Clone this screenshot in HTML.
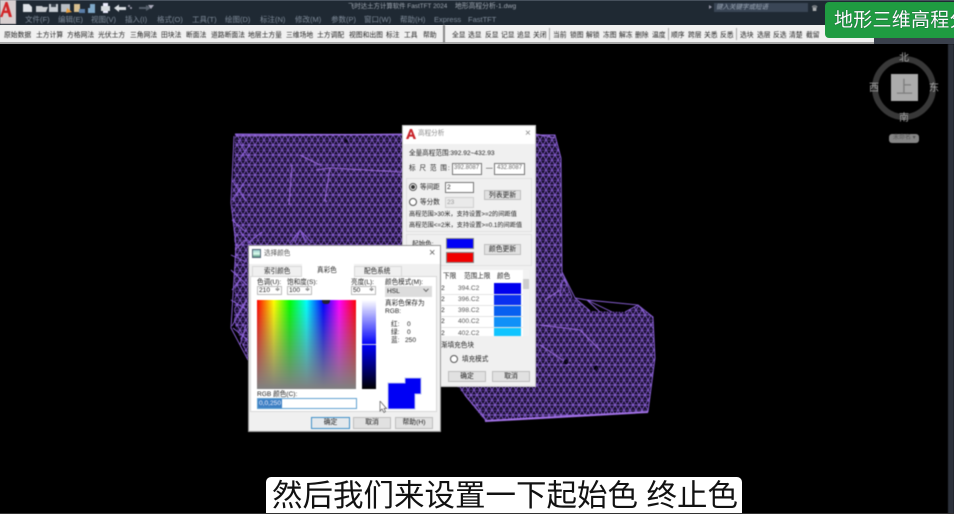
<!DOCTYPE html>
<html lang="zh"><head><meta charset="utf-8"><title>地形高程分析</title>
<style>
html,body{margin:0;padding:0;background:#000}
#p{position:relative;width:954px;height:514px;overflow:hidden;background:#000;font-family:"Liberation Sans","Noto Sans CJK SC",sans-serif}
#p div,#p span{position:absolute;white-space:nowrap;box-sizing:border-box}
.b{filter:blur(.55px)}
#m span{top:15px;font-size:7.5px;line-height:9px;color:#7f8b99}
#t span{top:6px;font-size:6.8px;line-height:9px;color:#222}
.d{background:#f0f0f0;border:1px solid #c8c8c8}
.d span{font-size:6.6px;line-height:9px;color:#222}
.i{background:#fff;border:1px solid #777}
.btn{background:#e1e1e1;border:1px solid #bdbdbd;font-size:6.8px;line-height:9px;color:#222;text-align:center}
.r{width:8px;height:8px;border:1px solid #555;border-radius:50%;background:#fff}
.g{border:1px solid #e0e0e0}
</style></head><body>
<div id="p">
<svg style="position:absolute;left:0;top:0;filter:blur(.4px)" width="954" height="514" viewBox="0 0 954 514">
<defs>
<pattern id="h" width="6" height="10" patternUnits="userSpaceOnUse">
<rect width="6" height="10" fill="#1a0f30"/>
<path d="M0 0H6M0 5H6M0 0L3 5L6 0M3 5L0 10M3 5L6 10" stroke="#8d62da" stroke-width=".75" fill="none"/>
</pattern>
</defs>
<polygon fill="url(#h)" points="235,134 555,135 561,158 562,272 571,296 590,311 625,312 638,305 653,317 655,358 648,412 530,418 485,421 458,387 440,370 300,370 248,360 234,322 235,250 232,205 235,140"/>
<g fill="none" stroke="#8d62da" stroke-width=".9">
<path d="M235,134 L555,135 L561,158 L562,272 L575,298 L587,300 L638,305 L653,317 L655,358 L648,412" />
<path d="M234,136 L231,203 L236,245 L231,328 L248,360"/>
<path d="M575,298 L590,311 M587,300 L600,312 M587,300 L612,312 M638,305 L625,312 M638,305 L645,313 M562,272 L572,297 M562,280 L560,296"/>
<path d="M231,255 L246,262 M231,270 L247,285 M247,270 L232,290 M231,300 L247,310 M247,300 L232,326 M233,328 L248,340 M246,325 L240,345"/>
<path d="M238,140 L250,160 M238,160 L250,145 M232,180 L245,200 M232,200 L246,180 M232,220 L246,232"/>
<path d="M240,232 L252,245 M290,243 L300,230 L312,243 M300,230 L306,243 M295,243 L300,230 M248,243 L262,232"/>
</g>
<g fill="none" stroke="#a070e4" stroke-width="1.3" opacity=".7">
<path d="M236,136 L402,134 M292,165 L289,205 M316,170 L330,168 L402,172 M330,168 L325,200 L327,202 M300,155 L320,165"/>
<path d="M535,134 L555,138 M235,250 L245,240 M545,300 L560,290 M540,325 L580,330 L600,350 M540,345 L570,365"/>
</g>
<path d="M485,421 L648,412" stroke="#a070e4" stroke-width="2"/>
<path d="M465,395 L486,420" stroke="#8a5fd0" stroke-width="1.3"/>
<g fill="#0a0618"><circle cx="566" cy="362" r="2.5"/><circle cx="596" cy="368" r="2.5"/><circle cx="346" cy="141" r="1.8"/></g>
<rect x="948" y="44" width="6" height="470" fill="#2b303a"/>
<circle cx="904" cy="88" r="29" fill="none" stroke="#383838" stroke-width="6"/>
</svg>

<div style="left:0;top:0;width:954px;height:25px;background:#1f2933"></div>
<div style="left:0;top:0;width:954px;height:1px;background:#46505c"></div>
<div style="left:0;top:25px;width:874px;height:18px;background:#f1f1f1"></div>
<div style="left:874px;top:36px;width:80px;height:8px;background:#3a404c"></div>
<div style="left:0;top:42px;width:874px;height:2px;background:#a8a8a8"></div>

<div class="b" id="tb">
<div style="left:0;top:0;width:16px;height:24px;background:#d8cfd0"></div>
<svg style="position:absolute;left:0;top:1px" width="16" height="18" viewBox="0 0 16 18"><path d="M0 16L5.5 1H7.5L12 16H9L7.8 12H3.8L2.5 16ZM4.6 9.6H7L5.9 5.4Z" fill="#d2262a"/></svg>
<svg style="position:absolute;left:20px;top:2px" width="135" height="12" viewBox="0 0 135 12">
<path d="M3 2H9L12 5V10H3Z" fill="#dfe3e8"/>
<path d="M16 4H22L23 5H28L26 10H16Z" fill="#c8ccd0"/>
<path d="M29 2H38V10H29Z" fill="#c8ced4"/><rect x="31" y="2" width="5" height="3" fill="#39424c"/>
<path d="M41 2H50V10H41Z" fill="#b8bec4"/><path d="M47 6L52 10L46 11Z" fill="#e8a040"/>
<path d="M54 2H60V10H54Z" fill="#d8c090"/><path d="M59 7H65V11H59Z" fill="#5a7ea8"/>
<path d="M70 2H75V11H68V6H70Z" fill="#7fa8c8"/>
<path d="M81 4H90V9H81Z" fill="#d8dce0"/><rect x="83" y="1" width="5" height="3" fill="#eef"/><rect x="83" y="9" width="5" height="2" fill="#eef"/>
<path d="M94 6L99 2.5V5H106V8H99V10Z" fill="#d8dde2"/><circle cx="111" cy="6" r="1" fill="#aab"/>
<path d="M119 5H126V3L131 6L126 9V7H119Z" fill="#56606c"/>
</svg>
<span style="left:128px;top:5px;width:2px;height:2px;background:#889"></span>
<span style="left:148px;top:5px;border:3px solid transparent;border-top:4px solid #aab"></span>
<span style="left:348px;top:2px;font-size:6.4px;line-height:10px;color:#a0a8b2">飞时达土方计算软件 FastTFT 2024</span>
<span style="left:455px;top:2px;font-size:6.8px;line-height:10px;color:#a0a8b2">地形高程分析-1.dwg</span>
<div style="left:714px;top:3px;width:94px;height:9px;background:#3a4656"></div>
<span style="left:716px;top:3px;font-size:6.5px;line-height:9px;color:#9aa6b4;font-style:italic">键入关键字或短语</span>
<span style="left:709px;top:5px;border:2px solid transparent;border-left:3px solid #99a"></span>
<span style="left:811px;top:4px;font-size:8px;line-height:9px;color:#ddd">&#9819;</span>
<div id="m">
<span style="left:25px">文件(F)</span><span style="left:58px">编辑(E)</span><span style="left:91px">视图(V)</span><span style="left:125px">插入(I)</span><span style="left:157px">格式(O)</span><span style="left:192px">工具(T)</span><span style="left:225px">绘图(D)</span><span style="left:260px">标注(N)</span><span style="left:295px">修改(M)</span><span style="left:331px">参数(P)</span><span style="left:364px">窗口(W)</span><span style="left:400px">帮助(H)</span><span style="left:434px">Express</span><span style="left:468px">FastTFT</span>
</div>
<div id="t" style="left:0;top:25px;width:874px;height:18px">
<span style="left:4px">原始数据</span><span style="left:36px">土方计算</span><span style="left:67px">方格网法</span><span style="left:98px">光伏土方</span><span style="left:130px">三角网法</span><span style="left:161px">田块法</span><span style="left:186px">断面法</span><span style="left:211px">道路断面法</span><span style="left:248px">地层土方量</span><span style="left:286px">三维场地</span><span style="left:317px">土方调配</span><span style="left:349px">视图和出图</span><span style="left:386px">标注</span><span style="left:404px">工具</span><span style="left:423px">帮助</span>
<div style="left:443px;top:0;width:2px;height:18px;background:#8a8a8a"></div>
<span style="left:452px">全显</span><span style="left:468px">选显</span><span style="left:485px">反显</span><span style="left:501px">记显</span><span style="left:517px">追显</span><span style="left:533px">关闭</span>
<div style="left:549px;top:3px;width:1px;height:12px;background:#aaa"></div>
<span style="left:553px">当前</span><span style="left:570px">锁图</span><span style="left:586px">解锁</span><span style="left:603px">冻图</span><span style="left:619px">解冻</span><span style="left:635px">删除</span><span style="left:652px">温度</span>
<div style="left:668px;top:3px;width:1px;height:12px;background:#aaa"></div>
<span style="left:671px">顺序</span><span style="left:688px">跨层</span><span style="left:704px">关悉</span><span style="left:720px">反悉</span>
<div style="left:736px;top:3px;width:1px;height:12px;background:#aaa"></div>
<span style="left:740px">选块</span><span style="left:757px">选层</span><span style="left:773px">反选</span><span style="left:789px">清楚</span><span style="left:806px">截留</span>
</div>
</div>

<div style="left:825px;top:2px;width:129px;height:36px;background:#1f9b41;border-radius:4px 0 0 4px"></div>
<span style="left:834px;top:8px;font-size:19px;line-height:26px;letter-spacing:.25px;color:#fff;text-shadow:0 0 1px #123">地形三维高程分</span>

<div class="b" style="left:0;top:0;width:954px;height:514px">
<div style="left:891px;top:74px;width:27px;height:27px;background:#ababab"></div>
<span style="left:896px;top:79px;font-size:17px;line-height:18px;color:#7e7e7e">上</span>
<span style="left:899px;top:52px;font-size:10px;line-height:13px;color:#a2a2a2">北</span>
<span style="left:899px;top:112px;font-size:10px;line-height:13px;color:#a2a2a2">南</span>
<span style="left:869px;top:82px;font-size:10px;line-height:13px;color:#a2a2a2">西</span>
<span style="left:929px;top:82px;font-size:10px;line-height:13px;color:#a2a2a2">东</span>
<div style="left:889px;top:134px;width:30px;height:9px;background:#858585;border-radius:3px"></div>
<span style="left:893px;top:134px;font-size:6px;line-height:9px;color:#555">未命名 ▾</span>
</div>

<!-- elevation dialog -->
<div class="d b" style="left:402px;top:125px;width:134px;height:262px">
<div style="left:0;top:0;width:132px;height:18px;background:#fff"></div>
<svg style="position:absolute;left:3px;top:2px" width="10" height="11" viewBox="0 0 10 11"><path d="M0 11L4 1H6L10 11H7.5L6.6 8.6H3.4L2.5 11ZM4 6.6H6L5 3.6Z" fill="#c9242a"/></svg>
<span style="left:15px;top:3px;color:#8a8a8a">高程分析</span>
<span style="left:122px;top:2px;font-size:10px;line-height:11px;color:#888">×</span>
<span style="left:6px;top:23px">全量高程范围:392.92~432.93</span>
<span style="left:6px;top:38px;letter-spacing:1px">标 尺 范 围:</span>
<div class="i" style="left:49px;top:37px;width:30px;height:12px"></div><span style="left:51px;top:38px;font-size:6px;color:#666">392.8087</span>
<span style="left:83px;top:38px">—</span>
<div class="i" style="left:91px;top:37px;width:31px;height:12px"></div><span style="left:94px;top:38px;font-size:6px;color:#666">432.8087</span>
<div class="g" style="left:3px;top:52px;width:126px;height:54px"></div>
<div class="r" style="left:6px;top:57px"></div><div style="left:8px;top:59px;width:4px;height:4px;border-radius:50%;background:#333"></div>
<span style="left:17px;top:57px">等间距</span>
<div class="i" style="left:42px;top:56px;width:29px;height:11px"></div><span style="left:44px;top:57px">2</span>
<div class="btn" style="left:81px;top:64px;width:37px;height:10px">列表更新</div>
<div class="r" style="left:6px;top:72px"></div>
<span style="left:17px;top:72px">等分数</span>
<div style="left:42px;top:71px;width:29px;height:11px;background:#eaeaea;border:1px solid #d0d0d0"></div><span style="left:44px;top:72px;color:#999">23</span>
<span style="left:6px;top:84px;font-size:6.2px">高程范围&gt;30米，支持设置&gt;=2的间距值</span>
<span style="left:6px;top:95px;font-size:6.2px">高程范围&lt;=2米，支持设置&gt;=0.1的间距值</span>
<div class="g" style="left:3px;top:108px;width:126px;height:32px"></div>
<span style="left:9px;top:114px">起始色:</span>
<div style="left:43px;top:112px;width:28px;height:11px;background:#0000f5;border:1px solid #888"></div>
<div style="left:43px;top:126px;width:28px;height:11px;background:#f00000;border:1px solid #888"></div>
<div class="btn" style="left:81px;top:118px;width:37px;height:11px">颜色更新</div>
<div style="left:38px;top:144px;width:88px;height:66px;background:#fff"></div>
<span style="left:40px;top:146px">下限</span><span style="left:61px;top:146px">范围上限</span><span style="left:94px;top:146px">颜色</span>
<span style="left:38px;top:158px">2</span><span style="left:38px;top:169px">2</span><span style="left:38px;top:180px">2</span><span style="left:38px;top:191px">2</span><span style="left:38px;top:203px">2</span>
<span style="left:55px;top:158px;color:#555">394.C2</span><span style="left:55px;top:169px;color:#555">396.C2</span><span style="left:55px;top:180px;color:#555">398.C2</span><span style="left:55px;top:191px;color:#555">400.C2</span><span style="left:55px;top:203px;color:#555">402.C2</span>
<div style="left:38px;top:168px;width:82px;height:1px;background:#e4e4e4"></div>
<div style="left:38px;top:179px;width:82px;height:1px;background:#e4e4e4"></div>
<div style="left:38px;top:190px;width:82px;height:1px;background:#e4e4e4"></div>
<div style="left:38px;top:201px;width:82px;height:1px;background:#e4e4e4"></div>
<div style="left:91px;top:157px;width:27px;height:11px;background:#0000ee"></div>
<div style="left:91px;top:169px;width:27px;height:10px;background:#0a30f0"></div>
<div style="left:91px;top:180px;width:27px;height:10px;background:#0860f0"></div>
<div style="left:91px;top:191px;width:27px;height:10px;background:#1090f8"></div>
<div style="left:91px;top:202px;width:27px;height:8px;background:#10c4ff"></div>
<div style="left:120px;top:144px;width:6px;height:66px;background:#f2f2f2"></div>
<div style="left:120px;top:153px;width:6px;height:10px;background:#cdcdcd"></div>
<span style="left:38px;top:215px">渐填充色块</span>
<div class="r" style="left:47px;top:229px"></div>
<span style="left:59px;top:229px">填充模式</span>
<div class="btn" style="left:45px;top:245px;width:38px;height:11px">确定</div>
<div class="btn" style="left:89px;top:245px;width:38px;height:11px">取消</div>
</div>

<!-- color dialog -->
<div class="d b" style="left:248px;top:245px;width:193px;height:187px;border-color:#999">
<div style="left:0;top:0;width:191px;height:18px;background:#fff"></div>
<div style="left:3px;top:3px;width:9px;height:9px;background:linear-gradient(#9cc,#dfe 55%,#4a8a7a);border:1px solid #567"></div>
<span style="left:15px;top:3px;color:#555">选择颜色</span>
<span style="left:180px;top:1px;font-size:11px;line-height:12px;color:#666">×</span>
<div style="left:1px;top:30px;width:187px;height:136px;background:#fff;border:1px solid #d8d8d8"></div>
<div style="left:3px;top:20px;width:50px;height:11px;background:#f0f0f0;border:1px solid #d8d8d8"></div>
<span style="left:15px;top:21px">索引颜色</span>
<div style="left:53px;top:18px;width:52px;height:14px;background:#fff"></div>
<span style="left:68px;top:20px">真彩色</span>
<div style="left:105px;top:20px;width:48px;height:11px;background:#f0f0f0;border:1px solid #d8d8d8"></div>
<span style="left:115px;top:21px">配色系统</span>
<span style="left:8px;top:32px">色调(U):</span><span style="left:38px;top:32px">饱和度(S):</span><span style="left:102px;top:32px">亮度(L):</span><span style="left:136px;top:32px">颜色模式(M):</span>
<div class="i" style="left:8px;top:40px;width:25px;height:9px;border-color:#bbb"></div><span style="left:10px;top:40px">210</span><span style="left:26px;top:40px;font-size:6px;color:#444">≑</span>
<div class="i" style="left:38px;top:40px;width:25px;height:9px;border-color:#bbb"></div><span style="left:40px;top:40px">100</span><span style="left:56px;top:40px;font-size:6px;color:#444">≑</span>
<div class="i" style="left:102px;top:40px;width:25px;height:9px;border-color:#bbb"></div><span style="left:104px;top:40px">50</span><span style="left:120px;top:40px;font-size:6px;color:#444">≑</span>
<div style="left:136px;top:40px;width:47px;height:11px;background:#dcdcdc"></div><span style="left:138px;top:41px">HSL</span><span style="left:175px;top:44px;width:4px;height:4px;border-right:1px solid #666;border-bottom:1px solid #666;transform:rotate(45deg) translate(-2px,-2px)"></span>
<div style="left:8px;top:54px;width:99px;height:89px;background:linear-gradient(rgba(128,128,128,0),#808080),linear-gradient(90deg,#f00,#ff0 17%,#0f0 33%,#0ff 50%,#00f 67%,#f0f 83%,#f00)"></div>
<div style="left:73px;top:54px;width:8px;height:4px;background:#223;border-radius:0 0 3px 3px"></div>
<div style="left:113px;top:54px;width:14px;height:89px;background:linear-gradient(#fff,#0000fa 50%,#000)"></div>
<div style="left:113px;top:98px;width:14px;height:1px;background:#ccd"></div>
<span style="left:136px;top:53px">真彩色保存为</span><span style="left:136px;top:61px">RGB:</span>
<span style="left:142px;top:74px">红:</span><span style="left:158px;top:74px">0</span>
<span style="left:142px;top:82px">绿:</span><span style="left:158px;top:82px">0</span>
<span style="left:142px;top:90px">蓝:</span><span style="left:156px;top:90px">250</span>
<svg style="position:absolute;left:137px;top:130px" width="38" height="36" viewBox="0 0 38 36"><polygon points="2,7 19,7 19,2 35,2 35,18 29,18 29,33 2,33" fill="#0000f5" stroke="#b8c0f0" stroke-width="1"/></svg>
<span style="left:8px;top:144px">RGB 颜色(C):</span>
<div style="left:8px;top:152px;width:100px;height:11px;background:#fff;border:1px solid #5fa0d0"></div>
<div style="left:9px;top:153px;width:24px;height:9px;background:#3d80c4"></div>
<span style="left:10px;top:153px;color:#eef">0,0,250</span>
<svg style="position:absolute;left:130px;top:155px" width="8" height="12" viewBox="0 0 8 12"><path d="M1 0V10L3 8L5 11.5L6.5 10.5L5 7.5H7.5Z" fill="#fff" stroke="#555" stroke-width=".7"/></svg>
<div class="btn" style="left:62px;top:171px;width:39px;height:12px;border:1px solid #3f8fc8;background:#e4e8ec">确定</div>
<div class="btn" style="left:104px;top:171px;width:38px;height:12px">取消</div>
<div class="btn" style="left:146px;top:171px;width:38px;height:12px">帮助(H)</div>
</div>

<div style="left:266px;top:477px;width:476px;height:37px;background:#fff;border-radius:5px 5px 0 0"></div>
<div style="left:0;top:513px;width:954px;height:1px;background:#333"></div>
<span style="left:272px;top:476px;font-size:30.5px;line-height:40px;color:#111">然后我们来设置一下起始色 终止色</span>
</div>
</body></html>
